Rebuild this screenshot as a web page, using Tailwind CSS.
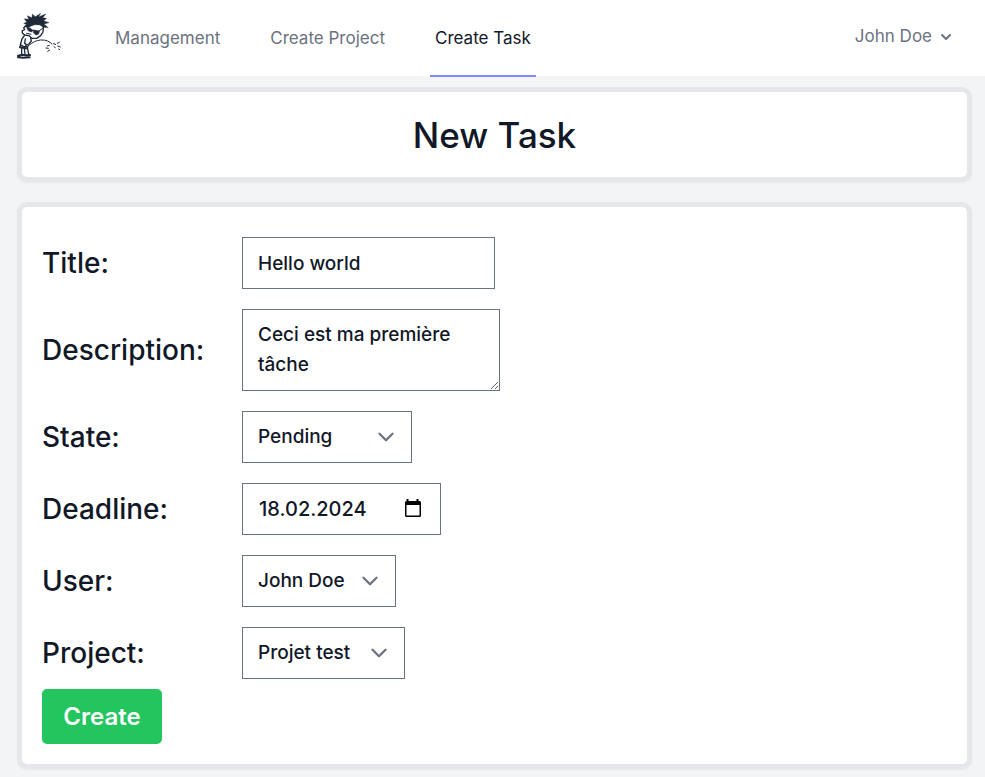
<!DOCTYPE html>
<html lang="en">
<head>
<meta charset="utf-8">
<meta name="viewport" content="width=device-width, initial-scale=1">
<title>New Task</title>
<script src="https://cdn.jsdelivr.net/npm/@tailwindcss/browser@4"></script>
</head>
<body class="min-h-screen bg-[#f3f4f6] font-['Inter',sans-serif] text-[#111827]">
<header class="flex h-[77px] items-center border-b border-[#f3f4f6] bg-white pr-[29px] pl-4">
  <a href="#" aria-label="Home" class="mr-12 mb-1 shrink-0">
    <svg class="h-[46px] w-[46px]" viewBox="18 15 138 138" fill="none" stroke="#1f2937" stroke-width="4" stroke-linecap="round" stroke-linejoin="round">
      <path fill="#1f2937" stroke-width="1" d="M46 56 49 49 41 47 50 42 43 32 56 34 52 23 66 29 67 18 76 26 92 16 86 26 108 18 98 29 110 31 101 38 117 44 102 48 115 59 99 58 90 51 75 50 62 55 54 61Z"/>
      <path d="M47 53 41 60 44 65 37 68 37 75 44 81 57 83 66 91 80 91 92 83 99 72 100 58"/>
      <path fill="#1f2937" stroke-width="2" d="M52 60 62 61 68 68 64 72 55 68ZM70 66 88 69 86 78 78 81 71 75Z"/>
      <path stroke-width="3" d="M65 66 73 69M87 69 98 61M50 76 63 79"/>
      <path d="M43 83 36 93 32 107 30 118M62 90 64 99 57 108 47 112M46 93 44 106 51 111M31 110 40 115 54 116M35 120 35 138M52 118 56 138M43 122 45 137"/>
      <path stroke-width="6" d="M24 143 37 140 48 142 60 141M24 148 40 149 59 148M30 118 49 121"/>
      <path stroke-width="3" d="M55 113C68 103 78 97 92 96C108 95 118 100 126 108"/>
      <path stroke-width="3" d="M130 107 137 109M142 106 148 103M143 114 151 117M146 123 149 125M132 116 136 119M118 112 112 114M108 120 115 121M113 130 119 126"/>
    </svg>
  </a>
  <nav class="-mb-px flex h-[77px] gap-10 self-start text-[17px] whitespace-nowrap text-[#6b7280]">
    <a href="#" class="flex items-center border-b-2 border-transparent px-[5px] pt-[2px]">Management</a>
    <a href="#" class="flex items-center border-b-2 border-transparent px-[5px] pt-[2px]">Create Project</a>
    <a href="#" aria-current="page" class="flex items-center border-b-2 border-[#818cf8] px-[5px] pt-[2px] text-[#111827]">Create Task</a>
  </nav>
  <button type="button" class="mb-[2px] ml-auto flex items-center gap-1 text-[17px] whitespace-nowrap text-[#6b7280]">
    John Doe
    <svg class="h-5 w-5" viewBox="0 0 20 20" fill="currentColor"><path fill-rule="evenodd" clip-rule="evenodd" d="M5.293 7.293a1 1 0 011.414 0L10 10.586l3.293-3.293a1 1 0 111.414 1.414l-4 4a1 1 0 01-1.414 0l-4-4a1 1 0 010-1.414z"/></svg>
  </button>
</header>
<main class="flex flex-col gap-5 pt-[10px] pr-[13px] pb-2 pl-[17px]">
  <section class="rounded-[10px] border-[5px] border-[#e5e7eb] bg-white pt-[21px] pb-[19px] text-center shadow-xs">
    <h1 class="text-[35px] leading-[45px] font-medium">New Task</h1>
  </section>
  <form class="rounded-[10px] border-[5px] border-[#e5e7eb] bg-white px-5 pt-[30px] pb-5 shadow-xs">
    <div class="grid grid-cols-[200px_1fr] items-center justify-items-start gap-y-5 text-[19px] leading-[30px] font-medium">
      <label for="title" class="text-[28px]">Title:</label>
      <input id="title" type="text" value="Hello world" class="h-[52px] w-[253px] border border-[#6b7280] bg-white px-[15px]">
      <label for="description" class="text-[28px]">Description:</label>
      <textarea id="description" rows="2" class="block h-[82px] w-[258px] border border-[#6b7280] bg-white px-[15px] py-[10px]">Ceci est ma première tâche</textarea>
      <label for="state" class="text-[28px]">State:</label>
      <div class="relative">
        <select id="state" class="h-[52px] w-[170px] appearance-none border border-[#6b7280] bg-white pr-[50px] pl-[15px]"><option>Pending</option></select>
        <svg class="pointer-events-none absolute top-[13px] right-[13px] h-[26px] w-[26px]" viewBox="0 0 20 20" fill="none" stroke="#6b7280" stroke-width="1.8" stroke-linecap="round" stroke-linejoin="round"><path d="M5 7.500l5 5 5-5"/></svg>
      </div>
      <label for="deadline" class="text-[28px]">Deadline:</label>
      <div class="relative">
        <input id="deadline" type="text" value="18.02.2024" class="h-[52px] w-[199px] border border-[#6b7280] bg-white pr-[50px] pl-4 text-[20px]">
        <button type="button" aria-label="Choose date" class="absolute top-4 right-[18px]">
          <svg class="h-5 w-5" viewBox="0 0 20 20"><path fill="#000" d="M3.500 0h2v2h8V0h2v2h1q1.500 0 1.500 1.500v13q0 1.500-1.500 1.500h-13Q2 18 2 16.500v-13Q2 2 3.500 2zM3.500 6v10.500h13V6z"/></svg>
        </button>
      </div>
      <label for="user" class="text-[28px]">User:</label>
      <div class="relative">
        <select id="user" class="h-[52px] w-[154px] appearance-none border border-[#6b7280] bg-white pr-[40px] pl-[15px]"><option>John Doe</option></select>
        <svg class="pointer-events-none absolute top-[13px] right-[13px] h-[26px] w-[26px]" viewBox="0 0 20 20" fill="none" stroke="#6b7280" stroke-width="1.8" stroke-linecap="round" stroke-linejoin="round"><path d="M5 7.500l5 5 5-5"/></svg>
      </div>
      <label for="project" class="text-[28px]">Project:</label>
      <div class="relative">
        <select id="project" class="h-[52px] w-[163px] appearance-none border border-[#6b7280] bg-white pr-[40px] pl-[15px]"><option>Projet test</option></select>
        <svg class="pointer-events-none absolute top-[13px] right-[13px] h-[26px] w-[26px]" viewBox="0 0 20 20" fill="none" stroke="#6b7280" stroke-width="1.8" stroke-linecap="round" stroke-linejoin="round"><path d="M5 7.500l5 5 5-5"/></svg>
      </div>
    </div>
    <button type="submit" class="mt-[10px] block h-[55px] w-[120px] rounded-[5px] bg-[#22c55e] text-[24px] font-semibold text-white">Create</button>
  </form>
</main>
</body>
</html>
